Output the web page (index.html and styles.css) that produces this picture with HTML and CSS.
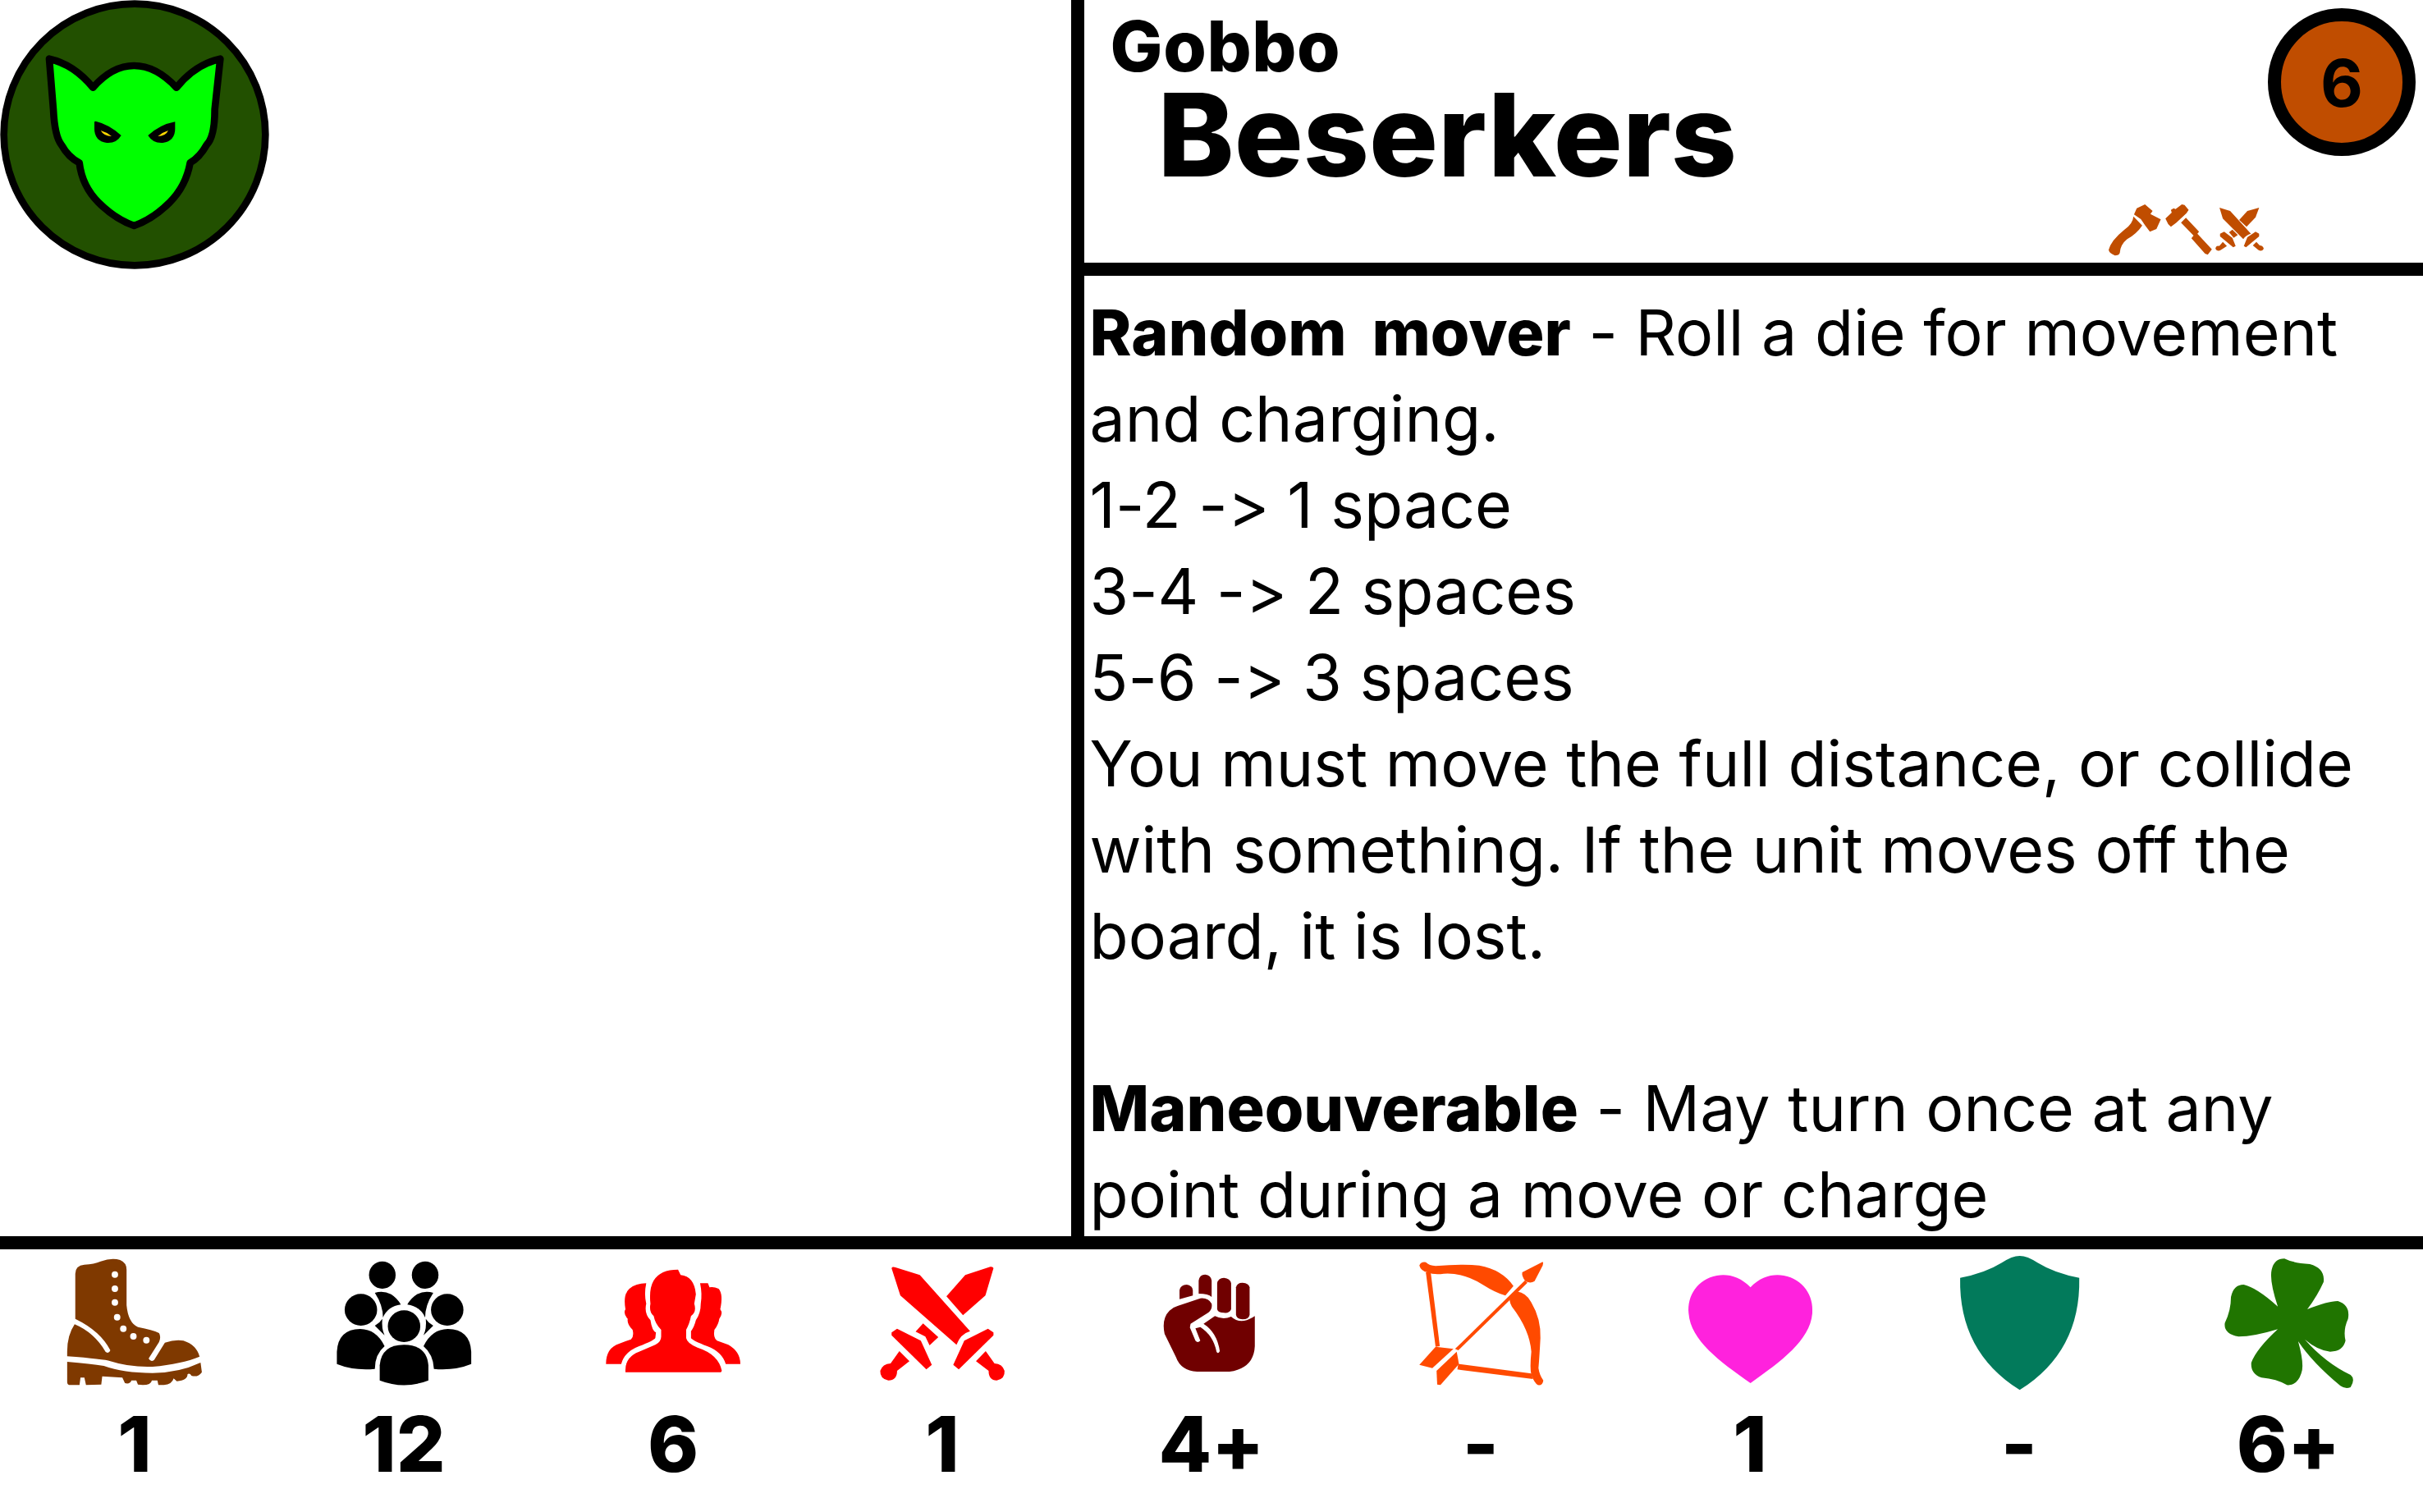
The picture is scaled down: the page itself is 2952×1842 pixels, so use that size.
FILE: index.html
```html
<!DOCTYPE html>
<html lang="en">
<head>
<meta charset="utf-8">
<title>Gobbo Beserkers</title>
<link rel="stylesheet" href="styles.css">
</head>
<body>
<main class="card">
  <div class="top">
    <section class="art">
      <svg class="faction" viewBox="0 0 1020 1020" role="img" aria-label="Gobbo faction">
        <circle cx="492" cy="492" r="478" fill="#225000" stroke="#000" stroke-width="26"/>
        <path d="M180 215Q270 235 340 320Q410 240 490 240Q570 240 645 320Q715 235 805 215L785 400Q785 500 755 530Q730 575 695 595Q680 680 620 740Q560 800 490 825Q420 800 360 740Q300 680 290 595Q250 575 225 530Q200 500 195 400Z" fill="#0f0" stroke="#000" stroke-width="26" stroke-linejoin="round"/>
        <path d="M345 445L350 443Q400 455 443 495Q425 525 390 522Q345 515 345 470Z"/>
        <path d="M640 445Q585 455 541 495Q560 525 595 522Q640 515 640 470Z"/>
        <path d="M368 477Q390 483 408 498Q380 498 368 477Z" fill="#ffd800"/>
        <path d="M615 477Q595 483 577 498Q605 498 615 477Z" fill="#ffd800"/>
      </svg>
    </section>
    <section class="info">
      <header class="head">
        <div class="names">
          <div class="faction-name">Gobbo</div>
          <h1 class="unit-name">Beserkers</h1>
        </div>
        <svg class="weapons" viewBox="147 745 568 192" role="img" aria-label="Weapons">
          <path d="M240 785L250 762L280 748L308 772L300 783L338 803L322 838L298 848Q280 825 265 802Z"/>
          <path d="M238 792L270 825Q250 855 215 875Q190 895 188 925Q185 935 170 935Q150 928 147 915Q155 880 205 840Q235 820 238 792Z"/>
          <path d="M355 800L378 778L375 768L385 762L392 765L415 748L425 750L440 768L432 780L395 815L375 830L365 820Z"/>
          <path d="M412 815L430 797L478 848L472 855L525 912L510 932L500 928L450 872L458 862Z"/>
          <path d="M553 760L592 772L668 855Q650 860 640 875L565 800Z"/>
          <path d="M698 760L655 772L625 805L652 830L685 795Z"/>
          <path d="M600 840L620 860L605 870L588 850Z"/>
          <path d="M555 855L570 848L600 870L612 900L603 905L555 865Z"/>
          <path d="M565 885L580 900L558 915Q545 922 538 910Q540 898 552 900Z"/>
          <path d="M698 855L685 848L655 868L642 900L650 905L698 865Z"/>
          <path d="M688 885L675 898L695 915Q708 922 715 910Q712 898 700 898Z"/>
        </svg>
        <div class="cost">6</div>
      </header>
      <div class="rules">
        <p><b>Random mover</b> - Roll a die for movement and charging.<br>1-2 -&gt; 1 space<br>3-4 -&gt; 2 spaces<br>5-6 -&gt; 3 spaces<br>You must move the full distance, or collide with something. If the unit moves off the board, it is lost.<br><br><b>Maneouverable</b> - May turn once at any<br>point during a move or charge</p>
      </div>
    </section>
  </div>
  <section class="stats">
    <div class="stat">
      <svg class="stat-icon" viewBox="0 0 200 176" role="img" aria-label="Move">
        <g transform="translate(-64 -35) scale(.3954 .3333)" fill="#7f3900">
          <path d="M232 350L232 185Q232 155 260 152Q290 150 310 140Q345 125 370 135Q390 145 390 170L390 300Q395 365 425 380Q470 390 490 402Q497 415 490 435L458 495Q465 510 475 500L508 437Q540 425 565 430Q605 445 615 488Q560 515 470 525Q400 528 340 505Q320 497 207 487L207 470Q207 410 230 370Q290 400 325 470Q335 480 340 465Q310 395 232 350Z"/>
          <path d="M207 507Q280 515 320 522Q380 548 470 548Q550 548 618 510L622 545Q610 565 590 558Q585 548 578 552Q578 575 545 578L535 568Q530 590 505 592L488 592L485 575L468 575Q465 592 440 592L425 590L420 575L405 575Q400 590 385 585L377 565L315 560L312 590L265 592L260 565L248 565L245 592L213 592Q207 590 207 580Z"/>
          <g fill="#fff">
            <ellipse cx="354" cy="188" rx="10" ry="12"/><ellipse cx="354" cy="240" rx="10" ry="12"/><ellipse cx="354" cy="290" rx="10" ry="12"/><ellipse cx="361" cy="344" rx="10" ry="12"/><ellipse cx="380" cy="386" rx="10" ry="12"/><ellipse cx="411" cy="414" rx="10" ry="12"/><ellipse cx="451" cy="428" rx="10" ry="12"/>
          </g>
        </g>
      </svg>
      <div class="stat-value">1</div>
    </div>
    <div class="stat">
      <svg class="stat-icon" viewBox="0 0 200 176" role="img" aria-label="Models">
        <g transform="translate(-392 -35) scale(.3954 .3333)" fill="#000">
          <ellipse cx="1178" cy="190" rx="41" ry="50"/><ellipse cx="1310" cy="190" rx="41" ry="50"/><ellipse cx="1112" cy="317" rx="50" ry="58"/><ellipse cx="1378" cy="317" rx="50" ry="58"/><ellipse cx="1245" cy="377" rx="50" ry="58"/>
          <path d="M1170 560L1170 520Q1175 445 1245 445Q1315 445 1320 520L1320 575Q1245 610 1170 575Z"/>
          <path d="M1038 515L1038 470Q1042 388 1110 387Q1160 388 1185 450Q1155 480 1155 533Q1090 540 1038 515Z"/>
          <path d="M1452 515L1452 470Q1448 388 1380 387Q1330 388 1305 450Q1335 480 1337 533Q1400 540 1452 515Z"/>
          <path d="M1155 255Q1180 245 1205 260Q1225 275 1235 298Q1195 305 1180 345Q1180 300 1155 255Z"/>
          <path d="M1335 255Q1310 245 1285 260Q1265 275 1255 298Q1295 305 1310 345Q1310 300 1335 255Z"/>
          <path d="M1155 375Q1170 365 1178 350Q1175 385 1185 410Z"/>
          <path d="M1335 375Q1320 365 1312 350Q1315 385 1305 410Z"/>
        </g>
      </svg>
      <div class="stat-value">12</div>
    </div>
    <div class="stat">
      <svg class="stat-icon" viewBox="0 0 200 176" role="img" aria-label="Wounds">
        <g transform="translate(-60 -35) scale(.3954 .3333)" fill="#f00">
          <path d="M258 545Q255 490 300 470L350 445Q368 435 368 415L368 390Q350 370 345 340Q330 325 335 295Q330 240 345 210Q365 170 420 170L428 190Q470 195 475 260L470 295Q478 325 460 340Q455 370 445 390L445 420Q448 440 480 455Q545 480 555 540L552 545Z"/>
          <path d="M198 515Q198 455 240 440L275 425Q285 415 280 390Q262 370 265 350Q250 330 258 315Q250 260 270 240Q290 220 322 220Q315 260 322 295Q315 330 335 355Q340 395 352 400L350 420Q345 430 300 450Q255 470 245 515Z"/>
          <path d="M612 515Q612 470 575 445L540 430Q528 420 532 390Q545 370 547 350Q560 330 550 315Q560 260 545 240Q530 232 517 235L512 220L488 220Q495 260 490 295Q490 330 475 355Q470 380 460 395L460 420Q465 430 510 450Q555 470 567 515Z"/>
        </g>
      </svg>
      <div class="stat-value">6</div>
    </div>
    <div class="stat">
      <svg class="stat-icon" viewBox="0 0 200 176" role="img" aria-label="Attacks">
        <g transform="translate(-388 -35) scale(.3954 .3333)" fill="#f00">
          <path d="M1078 165Q1080 158 1090 162L1165 190L1320 395Q1290 405 1278 445L1105 265Z"/>
          <path d="M1392 165Q1390 158 1382 160L1305 190L1247 268L1298 337L1367 265Z"/>
          <path d="M1175 367L1222 417L1195 447L1182 415L1152 397Z"/>
          <path d="M1078 400L1095 386L1168 430L1202 518L1185 535L1078 410Z"/>
          <path d="M1102 468L1133 505L1095 540Q1095 575 1068 575Q1042 570 1043 540Q1050 515 1075 513Z"/>
          <path d="M1392 400L1375 386L1302 430L1268 518L1285 535L1392 410Z"/>
          <path d="M1368 468L1338 505L1377 540Q1377 575 1402 575Q1428 570 1426 540Q1420 515 1395 513Z"/>
        </g>
      </svg>
      <div class="stat-value">1</div>
    </div>
    <div class="stat">
      <svg class="stat-icon" viewBox="0 0 200 176" role="img" aria-label="Melee">
        <g transform="translate(-56 -35) scale(.3954 .3333)" fill="#700000">
          <path d="M296 278L296 245Q300 225 318 225Q335 228 337 245L337 265Z"/>
          <path d="M355 258L355 210Q358 188 375 188Q393 190 395 210L395 270Q385 258 355 258Z"/>
          <path d="M412 315L412 220Q415 200 433 200Q452 202 455 220L455 315Q450 330 433 328Q415 328 412 315Z"/>
          <path d="M470 335L470 235Q473 218 490 218Q510 220 512 235L512 335Q510 352 490 352Q472 350 470 335Z"/>
          <path d="M528 340L528 450Q525 530 450 543L350 543Q300 540 285 490L250 405Q240 350 265 320Q275 308 290 303L360 275Q385 272 395 295Q398 315 385 327L330 368L328 382L345 430Q352 440 360 430L345 385L360 380Q400 410 410 470Q415 480 420 468Q412 400 370 368L405 340Q430 355 455 342Q485 375 528 340Z"/>
        </g>
      </svg>
      <div class="stat-value">4+</div>
    </div>
    <div class="stat">
      <svg class="stat-icon" viewBox="0 0 200 176" role="img" aria-label="Ranged">
        <g transform="translate(-384 -35) scale(.3954 .3333)" fill="#ff4a00">
          <path d="M1035 155Q1040 140 1055 143Q1065 155 1085 157Q1170 148 1220 155Q1290 170 1325 230L1300 265Q1270 255 1230 225Q1170 180 1110 185Q1080 190 1060 180Q1040 175 1035 155Z"/>
          <path d="M1335 250Q1365 255 1380 290Q1410 350 1408 420Q1405 490 1402 530Q1405 555 1417 575Q1415 595 1400 592Q1390 585 1380 555Q1375 530 1380 470Q1375 390 1320 305Q1310 285 1315 270Z"/>
          <path d="M1055 180L1070 180L1098 450L1085 452Z"/>
          <path d="M1155 515L1380 550L1385 570L1152 535Z"/>
          <path d="M1145 460L1360 210L1368 218L1155 465Z"/>
          <path d="M1352 180L1415 142Q1418 145 1415 155L1390 212Q1378 222 1362 213Q1350 195 1352 180Z"/>
          <path d="M1085 452L1140 460L1075 530L1035 518Z"/>
          <path d="M1150 470L1157 515L1100 592L1090 590L1088 540Z"/>
        </g>
      </svg>
      <div class="stat-value">-</div>
    </div>
    <div class="stat">
      <svg class="stat-icon" viewBox="0 0 200 176" role="img" aria-label="Health">
        <path transform="translate(-32 -5) scale(.3333)" fill="#ff22dd" d="M398 145C435 105 480 95 520 102C590 115 630 175 624 240C615 340 510 415 398 495C285 415 180 340 172 240C166 175 205 115 275 102C315 95 360 105 398 145Z"/>
      </svg>
      <div class="stat-value">1</div>
    </div>
    <div class="stat">
      <svg class="stat-icon" viewBox="0 0 200 176" role="img" aria-label="Armour">
        <path transform="translate(-380 -35) scale(.6202 .3333)" fill="#027a5b" d="M775 120Q790 120 810 145Q845 185 892 200Q895 470 775 610Q655 470 658 200Q705 185 740 145Q760 120 775 120Z"/>
      </svg>
      <div class="stat-value">-</div>
    </div>
    <div class="stat">
      <svg class="stat-icon" viewBox="0 0 200 176" role="img" aria-label="Luck">
        <path transform="translate(-708 -35) scale(.6202 .3333)" fill="#207500" d="M1282 305Q1265 210 1270 170Q1275 130 1295 130Q1310 145 1345 150Q1375 165 1372 215Q1360 265 1340 315Q1380 285 1400 285Q1425 300 1420 350Q1410 390 1415 430Q1410 470 1385 470Q1360 465 1335 425Q1375 510 1425 555Q1435 570 1425 600Q1415 608 1405 595Q1350 510 1322 432Q1335 520 1328 550Q1320 595 1300 592Q1280 570 1250 565Q1228 550 1230 510Q1240 460 1282 388Q1235 415 1205 415Q1175 405 1178 365Q1190 320 1190 270Q1195 225 1215 225Q1240 235 1282 305Z"/>
      </svg>
      <div class="stat-value">6+</div>
    </div>
  </section>
</main>
</body>
</html>
```
FILE: styles.css
```css
* { box-sizing: border-box; }
html, body { margin: 0; padding: 0; background: #fff; }
body { font-family: Inter, "Liberation Sans", sans-serif; font-feature-settings: "calt" 0; color: #000; }
.card { width: 2952px; height: 1842px; display: flex; flex-direction: column; overflow: hidden; }
.top { display: flex; height: 1505.6px; flex: none; }
.art { width: 1304.6px; flex: none; }
.faction { display: block; width: 340px; height: 340px; }
.info { flex: 1; min-width: 0; border-left: 16px solid #000; display: flex; flex-direction: column; }
.head { height: 336px; flex: none; border-bottom: 16px solid #000; display: flex; padding-left: 32px; }
.names { flex: 1; padding-top: 19px; }
.faction-name { font-size: 85px; font-weight: 800; line-height: 76px; letter-spacing: .6px; }
.unit-name { margin: 0 0 0 58px; font-size: 140px; font-weight: 800; line-height: 138px; }
.weapons { width: 189px; height: 64px; align-self: flex-end; margin: 0 5px 8px 0; fill: #c04d00; flex: none; }
.cost { width: 180px; height: 180px; margin: 10px 9px 0 0; border: 16px solid #000; border-radius: 50%; background: #c04d00; display: flex; align-items: center; justify-content: center; font-size: 80px; font-weight: 700; flex: none; }
.rules { padding: 17px 0 0 7px; font-size: 77px; line-height: 104.95px; }
.rules p { margin: 0; }
.rules b { font-weight: 800; word-spacing: 14px; }
.stats { flex: 1; border-top: 16px solid #000; display: grid; grid-template-columns: repeat(9, 1fr); }
.stat { display: flex; flex-direction: column; align-items: center; padding-top: 3px; }
.stat-icon { display: block; width: 200px; height: 176px; }
.stat-value { margin-top: 4px; font-size: 94px; font-weight: 800; line-height: 109px; }
```
